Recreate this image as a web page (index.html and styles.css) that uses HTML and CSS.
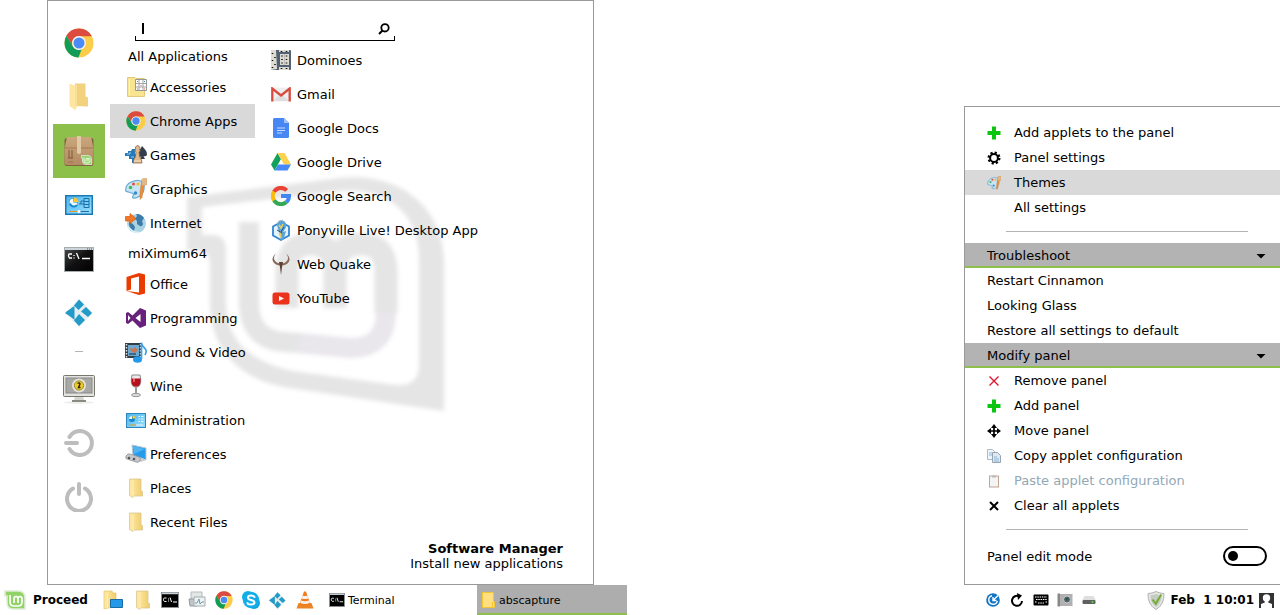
FILE: index.html
```html
<!DOCTYPE html>
<html lang="en">
<head>
<meta charset="utf-8">
<title>Desktop</title>
<link rel="stylesheet" href="styles.css">
</head>
<body>
<svg class="defs" width="0" height="0" aria-hidden="true">
  <defs>
    <linearGradient id="fold" x1="0" x2="1"><stop offset="0" stop-color="#ffeaa6"/><stop offset="1" stop-color="#f0cd6c"/></linearGradient>
    <linearGradient id="blue" x1="0" y1="0" x2="1" y2="1"><stop offset="0" stop-color="#4bb4ee"/><stop offset="1" stop-color="#9be0ff"/></linearGradient>
    <linearGradient id="box" x1="0" y1="0" x2="0" y2="1"><stop offset="0" stop-color="#c9a67c"/><stop offset="1" stop-color="#b48b63"/></linearGradient>
    <linearGradient id="term" x1="0" y1="0" x2="1" y2="1"><stop offset="0" stop-color="#4c4c4c"/><stop offset=".5" stop-color="#111"/><stop offset="1" stop-color="#000"/></linearGradient>
  </defs>
  <symbol id="chrome" viewBox="0 0 30 30">
    <circle cx="15" cy="15" r="14.5" fill="#fccd48"/>
    <path d="M2.4 7.8A14.5 14.5 0 0 1 27.8 8.2H15a6.8 6.8 0 0 0-6 10.2z" fill="#dc4b40"/>
    <path d="M2.4 7.8 9 18.4a6.8 6.8 0 0 0 8.6 2.9L14.5 29.5A14.5 14.5 0 0 1 2.4 7.8z" fill="#119d58"/>
    <circle cx="15" cy="15" r="6.9" fill="#f4f4f4"/><circle cx="15" cy="15" r="5.5" fill="#4c8bf5"/>
  </symbol>
  <symbol id="folder" viewBox="0 0 20 28">
    <path d="M6 .5H16.500V13.500L19 14.500V23.500L6 23z" fill="#f2d27d"/>
    <path d="M.5.500 6.500 3V27.500L.5 23z" fill="#ffe6a0"/><path d="M6.500 3V27.500L8 23V1z" fill="#fbe09a"/>
  </symbol>
  <symbol id="folder-s" viewBox="0 0 14 20">
    <path d="M.5 1H12V13l1.500.5V18H4.500L4 19.500.5 17.500z" fill="url(#fold)" stroke="#d9c691" stroke-width=".8"/>
    <path d="M4 2.500V19" stroke="#fff0bd" stroke-width="1"/>
  </symbol>
  <symbol id="mint" viewBox="0 0 22 20">
    <path d="M1 1H14q7 0 7 7V19H9Q3 19 3 12V6H1z" fill="#91d366" stroke="#e0ecd8" stroke-width="1.600"/>
    <path d="M6 5V12q0 4 4 4h4q4 0 4-4V9q0-2.500-2-2.500T14 9v4M14 9q0-2.500-2-2.500T10 9v4" fill="none" stroke="#fff" stroke-width="1.700"/>
  </symbol>
  <symbol id="package" viewBox="0 0 30 30">
    <rect x=".5" y="2" width="29" height="28" rx="2.500" fill="#80623f"/>
    <path d="M3 1H27L29.500 12V27q0 2-2 2H3Q.5 29 .5 27V12z" fill="url(#box)"/>
    <path d="M.5 12H29.500" stroke="#a17b55"/><path d="M13 0h4v17q-2 2-4 0z" fill="#dfcaa5"/>
    <path d="M5 16v6M8 16v6M4 22h5M4 15h2M7 15h2" stroke="#7d5c3a"/><path d="M4 26h5" stroke="#97734f"/>
    <use href="#mint" x="17" y="19" width="11" height="10"/>
  </symbol>
  <symbol id="control" viewBox="0 0 28 20">
    <rect x=".75" y=".75" width="26.500" height="18.500" fill="url(#blue)" stroke="#1979b4" stroke-width="1.500"/>
    <circle cx="8.500" cy="7.500" r="4.500" fill="#1489ce"/><path d="M9 7V2.500A5 5 0 0 1 13.500 7z" fill="#ffc62b"/><path d="M8.500 7.500V3.500a4 4 0 1 0 4 4z" fill="#f0f7fa"/><path d="M5 8.500a4 4 0 0 0 7 1.500" fill="none" stroke="#1489ce" stroke-width="2"/>
    <path d="M14 9h2V6h3M16 9h3M19 3.500h5v9h-5zM19 6.500h5M19 9.500h5" fill="none" stroke="#1a70a5"/>
    <path d="M4 16.500H13" stroke="#e79a21"/><path d="M15 16.500H24" stroke="#256e9c"/><circle cx="14" cy="16.500" r="1.500" fill="#fff"/>
  </symbol>
  <symbol id="admin" viewBox="0 0 20 15">
    <rect x=".5" y=".5" width="19" height="14" fill="url(#blue)" stroke="#2d87bd"/>
    <circle cx="6" cy="6" r="3" fill="#1489ce"/><path d="M6.500 5.500V2.500a3 3 0 0 1 3 3z" fill="#ffc62b"/><path d="M6 6V3a3 3 0 0 0-3 3z" fill="#f0f7fa"/>
    <path d="M12.500 3.500h1.500M12.500 6h1.500M12.500 8.500h1.500M15 3.500h2.500M15 6h2.500M15 8.500h2.500" stroke="#e4f5fd"/>
    <path d="M3 12h7" stroke="#e79a21"/><path d="M10 12h7" stroke="#f4f4f4"/>
  </symbol>
  <symbol id="terminal" viewBox="0 0 30 25">
    <rect x=".5" y=".5" width="29" height="24" fill="url(#term)" stroke="#a8adb0"/>
    <path d="M1 2H29" stroke="#cdd5dc" stroke-width="2"/><path d="M23 2h5" stroke="#555" stroke-dasharray="1 1"/>
    <path d="M8 7H5.500Q4.500 7 4.500 8.500T5.500 11H8M10 8v1M10 10.500v1M12.500 6l2.500 6M18 11.500H26" fill="none" stroke="#fff" stroke-width="1.300"/>
  </symbol>
  <symbol id="terminal-s" viewBox="0 0 18 16">
    <rect x=".5" y=".5" width="17" height="15" fill="#000" stroke="#8d9194"/>
    <path d="M1 1.500H17" stroke="#c9d1d8" stroke-width="1.500"/>
    <path d="M5.500 6H3.500Q2.500 6 2.500 7.500T3.500 9.500H5.500M7.500 6.500v1M7.500 8.500v1M9 5.500l1.500 4.500M12 10H16" fill="none" stroke="#fff"/>
  </symbol>
  <symbol id="kodi" viewBox="0 0 28 28">
    <path d="M14 0 28 14 14 28 0 14z" fill="#e5edf0"/>
    <path d="M14 .5 19 5.500 13.500 11 9 6.500zM8 8l1.500-1V21L1 13zM21 8 27 14 23 18 16 12.500zM14 15l6 6-6 6-5-5.500z" fill="#229bc9"/>
    <path d="M9 8v12L0 14z" fill="#229bc9"/>
  </symbol>
  <symbol id="monitor" viewBox="0 0 32 30">
    <ellipse cx="16" cy="28.500" rx="15" ry="1.500" fill="#eee"/>
    <path d="M12 22h8l1 4h-10z" fill="#d5d5cf"/><path d="M9 27h14" stroke="#8a8a82" stroke-width="2"/>
    <rect x=".5" y="1.500" width="31" height="21" rx="1" fill="#e2e2de" stroke="#77776f"/>
    <rect x="3" y="4" width="26" height="15" fill="#a8a9a4" stroke="#888"/>
    <circle cx="16" cy="11.500" r="7" fill="#e2e1d6"/><circle cx="16" cy="11.500" r="4.600" fill="#f0cb22" stroke="#a08a2c"/>
    <path d="M14.500 9.500q2-1.500 2.500.5l-1.500 3.500h2" fill="none" stroke="#222" stroke-width="1.400"/>
  </symbol>
  <symbol id="logout" viewBox="0 0 30 28">
    <path d="M5.500 8A12 12 0 1 1 5.500 20M2 14H13" fill="none" stroke="#bdbdbd" stroke-width="4" stroke-linecap="round"/>
  </symbol>
  <symbol id="power" viewBox="0 0 28 30">
    <path d="M8 6.500A12 12 0 1 0 20 6.500M14 2V12" fill="none" stroke="#bdbdbd" stroke-width="4" stroke-linecap="round"/>
  </symbol>
  <symbol id="accessories" viewBox="0 0 22 22">
    <path d="M2.500 1.500H10l1 1H19.500V20.500H2.500z" fill="#f8e491" stroke="#e2cb78"/><path d="M4.500 3v16" stroke="#fff4c4"/>
    <path d="M10.500 3.500h11v11H10.500z" fill="#fff" stroke="#999"/><path d="M14 4V14M18 4V14M11 7.500H21M11 11H21" stroke="#a5a5a5"/>
    <path d="M12 5.500h1M15.500 9.500h1M19 13h1" stroke="#de5d48"/><path d="M19 5.500h1M12 13h1" stroke="#4b83d1"/>
  </symbol>
  <symbol id="games" viewBox="0 0 22 22">
    <path d="M17 2q-1 3-4 5v5q2 2 3.500 0L15 15h5l-1.500-3q3.500 1 3.500-2t-5-8Z" fill="#343e49"/>
    <path d="M0 9h3V7h3l1-2h3v5h3v5h-2v4H7v-4H4v-3H0z" fill="#2879ba"/><path d="M2 10h3V8M6 13h3" stroke="#8ec9ee" fill="none"/>
    <path d="M12.500 1.500a3 3 0 0 1 2 4.500l1 1-1.500 1q0 5 2.500 8l.5 3H8l.5-3q2.500-3 2.500-8L9.500 7l1-1q-1-4 2-4.500" fill="#dfb98c" stroke="#7c5735" stroke-width=".7"/>
    <path d="M9 17h7" stroke="#f7e2c2"/>
  </symbol>
  <symbol id="graphics" viewBox="0 0 22 22">
    <path d="M6 4Q17-.5 19 8q1 5-3 9-5 4-8 3-1-1 .5-2.500T5 14.500 .8 13Q0 7 6 4z" fill="#c9e5f5" stroke="#6fabd2" stroke-width="1.200"/>
    <circle cx="5.500" cy="9.500" r="1.800" fill="#45b95b"/><circle cx="8.500" cy="6" r="1.600" fill="#e4534f"/><circle cx="13" cy="6" r="1.600" fill="#edba2d"/><circle cx="10.500" cy="15" r="1.800" fill="#328dd5"/>
    <path d="m17 1 4.500-.5.500 6-3 1-2 12-2 2V14l1-7z" fill="#eb8c36" stroke="#cc8140" stroke-width=".5"/><path d="m17 1 4.500-.5.500 6-5 1z" fill="#dfb98a"/>
  </symbol>
  <symbol id="internet" viewBox="0 0 22 22">
    <circle cx="11.500" cy="11.500" r="9.500" fill="#a9d3e3"/>
    <path d="M11 2q5-.5 8 4l-2 3 1 3q-1 3-3 2l-3-2v-3l-2-2 2-3zM4 10l4 2 2 3-1 4q-4-1-5-6z" fill="#3d7ca9"/>
    <path d="M2.500 14q5 7 12 6.500" stroke="#dcf1f8" stroke-width="1.500" fill="none"/>
    <path d="M.5 4.500H5V1.500L11 6.500 5 11.500V9H.5z" fill="#f27727" stroke="#d95710" stroke-width=".7"/>
  </symbol>
  <symbol id="office" viewBox="0 0 20 22"><path d="M.5 4 13 0l6 1.500v19L13 22 .5 18l12.500 1.500V3.500L5 5.500V16.500L.5 18z" fill="#eb3c00"/></symbol>
  <symbol id="vs" viewBox="0 0 20 20">
    <path d="M14 0 20 2.500V17.500L14 20 6.500 12.500 2 16 0 15V5l2-1 4.500 3.500zM14.500 6 9.500 10l5 4zM2 7v6l2.500-3z" fill="#68217a" fill-rule="evenodd"/>
  </symbol>
  <symbol id="media" viewBox="0 0 22 22">
    <path d="M0 2H17V17H0z" fill="#353d44"/><path d="M1.500 3v14M15.500 3v14" stroke="#e2e5e7" stroke-width="1.500" stroke-dasharray="1.500 1.500"/>
    <path d="M3 4H14V15H3z" fill="#6fa9d0"/><path d="m4 7 4 1 2-2 3 3-3 3-3-1z" fill="#c67753"/><path d="M4 12h7v2h-7z" fill="#3d6b87"/>
    <ellipse cx="12.500" cy="18.500" rx="4.500" ry="3.200" fill="#2499ea"/><path d="M16.500 18V1.500q0 3 3 5.500t.5 7" fill="none" stroke="#3fa5e9" stroke-width="1.700"/>
  </symbol>
  <symbol id="wine" viewBox="0 0 14 24">
    <path d="M3 1h8q2 9-1.500 11.500-2.500 1.500-5 0Q1 10 3 1z" fill="#ececec" stroke="#888"/><path d="M2.500 4.500h9q.5 6-2 7.500-2.500 1-5 0-2.500-1.500-2-7.500z" fill="#b70f1c"/>
    <path d="M7 13v7" stroke="#999" stroke-width="2"/><ellipse cx="7" cy="21" rx="4.500" ry="1.700" fill="#d9d9d9" stroke="#999"/><path d="M5 3v5" stroke="#f5b9bd"/>
  </symbol>
  <symbol id="prefs" viewBox="0 0 22 20">
    <path d="M7 1 21 4v12L8 11z" fill="#279bea" stroke="#bfc7cd"/><path d="m8 2 12 3-11 5z" fill="#4fb4f4"/><path d="m11 15 6-1 4 2-5 2z" fill="#ccc"/>
    <path d="M1 12q2-3 4-2l9 3q2 1 1 4-2 2-4 1l-9-3q-2 0-1-3z" fill="#c4c7cb" stroke="#888" stroke-width=".7"/><circle cx="4" cy="14" r="1.300" fill="#555"/><circle cx="9" cy="15" r="1.300" fill="#555"/>
  </symbol>
  <symbol id="dominoes" viewBox="0 0 20 20">
    <rect width="20" height="20" rx="1" fill="#536174"/><path d="M0 0h5l1 19-6 1zM9 4h9v11H9zM8 0h10v2H8zM8 17h10v3H8z" fill="#dedbd2"/>
    <path d="M1.500 3v1M4 7v1M1.500 10v1M4 14v1M1.500 17v1M11 5.500v1M15.500 5.500v1M11 9v1M15.500 9v1M11 12.500v1M15.500 12.500v1M10.500 1v1M15.500 1v1M10.500 18v1M15.500 18v1" stroke="#111" stroke-width="1.600"/><path d="M13.500 4v11" stroke="#bbb"/>
  </symbol>
  <symbol id="gmail" viewBox="0 0 20 15"><path d="M1 .5H19V14.500H1z" fill="#eee"/><path d="m2 14 8-7 8 7z" fill="#dedede"/><path d="M1.300 14.500V1.500L10 8.500l8.700-7V14.500" fill="none" stroke="#d94a3f" stroke-width="2.300"/></symbol>
  <symbol id="docs" viewBox="0 0 16 20"><path d="M1.500 0H11l5 5V18.500q0 1.500-1.500 1.500h-13Q0 20 0 18.500v-17Q0 0 1.500 0z" fill="#4787f3"/><path d="M11 0v5h5z" fill="#a3c3fa"/><path d="M4 10h8M4 12.500h8M4 15h5" stroke="#c5d9fc" stroke-width="1.200"/></symbol>
  <symbol id="drive" viewBox="0 0 20 18"><path d="M6.500 0 10 6 3.500 17.500 0 11.500z" fill="#11a15d"/><path d="M6.500 0H13.500L20 11.500H13z" fill="#ffd04b"/><path d="M7 11.500H20L16.500 17.500H3.500z" fill="#4688f4"/></symbol>
  <symbol id="google" viewBox="0 0 20 20"><g fill="none" stroke-width="4"><path d="M3 5.800A8 8 0 0 1 15.700 4.400" stroke="#ea4335"/><path d="M3 14.200A8 8 0 0 1 3 5.800" stroke="#fbbc05"/><path d="M15.300 16A8 8 0 0 1 3 14.200" stroke="#34a853"/><path d="M10 10H18q0 4-2.700 6" stroke="#4285f4"/></g></symbol>
  <symbol id="pony" viewBox="0 0 18 22">
    <path d="m9 3 8 4.500v9L9 21l-8-4.500v-9z" fill="#e4f3fb" stroke="#3186d2" stroke-width="1.800"/>
    <path d="M5 6Q6 0 12 2q4 3 1 8l-2 3 3-1-2 7-3 3-2-9z" fill="#5aa3d8"/><path d="m7 6 2 3 2-4M8 12l1 7" stroke="#e9cf55" stroke-width="1.500" fill="none"/><path d="M5 5q1-4 6-4" stroke="#a4b3bf" fill="none"/><path d="M5 11l5 3M12 8l-3 5" stroke="#234d88" fill="none"/>
  </symbol>
  <symbol id="quake" viewBox="0 0 18 22"><path d="M4 .5Q-1 4 1 8.500 3 12.500 9 12.500T17 8.500Q19 4 14 .5q3 3.500 1.500 6.500Q13.500 10.500 9 10.500T2.500 7Q1 4 4 .5z" fill="#8a6a5c"/><path d="M7 9h4L10 14 9 22 8 14z" fill="#5d3f34"/></symbol>
  <symbol id="youtube" viewBox="0 0 18 13"><rect x=".5" y=".5" width="17" height="12" rx="2.500" fill="#ea321d"/><path d="m7 4 5 2.500L7 9z" fill="#fff"/></symbol>
  <symbol id="plus" viewBox="0 0 14 14"><path d="M5 .5h4V5h4.500v4H9v4.500H5V9H.5V5H5z" fill="#0bc510"/></symbol>
  <symbol id="gear" viewBox="0 0 14 14"><circle cx="7" cy="7" r="5.200" fill="none" stroke="#000" stroke-width="2.600" stroke-dasharray="2.100 1.980"/><circle cx="7" cy="7" r="3.900" fill="none" stroke="#000" stroke-width="2"/></symbol>
  <symbol id="remove" viewBox="0 0 14 14"><path d="m2.500 2.500 9 9M11.500 2.500l-9 9" stroke="#dd1730" stroke-width="1.400"/></symbol>
  <symbol id="move" viewBox="0 0 14 14"><path d="M7 2v10M2 7h10" stroke="#000" stroke-width="1.700"/><path d="M7 0 10 4H4zM7 14l3-4H4zM0 7l4-3v6zM14 7l-4-3v6z"/></symbol>
  <symbol id="copy" viewBox="0 0 14 14"><path d="M.5.5h5l2 2v8h-7z" fill="#eef5fb" stroke="#b0b8c0"/><path d="M5.500 3.500h5l3 3v7h-8z" fill="#dceaf5" stroke="#99a4ae"/><path d="M2 4h3M2 6h3M7 8h3M7 10h5M7 12h5" stroke="#88b9db"/></symbol>
  <symbol id="paste" viewBox="0 0 14 14"><rect x="2.500" y="2" width="9" height="11" fill="#f4f4f4" stroke="#c1a597"/><path d="M5 1.500h4v2H5z" fill="#bbb"/></symbol>
  <symbol id="clear" viewBox="0 0 14 14"><path d="m3 3 8 8M11 3l-8 8" stroke="#000" stroke-width="2"/></symbol>
  <symbol id="desktop" viewBox="0 0 20 20"><path d="M1 1h8l1 2h3v14l-8 1-4 1z" fill="url(#fold)" stroke="#dfbd66" stroke-width=".6"/><path d="M4.500 3v15" stroke="#fff0bd"/><path d="M7.500 9.500h12v8h-12z" fill="#2499ea" stroke="#196ba5"/></symbol>
  <symbol id="sysmon" viewBox="0 0 18 18"><path d="M3 1h11v9H3z" fill="#e4e6e6" stroke="#b5bbbd"/><path d="M1 8h8v7H2z" fill="#bfc5c8" stroke="#929b9f"/><path d="M6 6h11v9H6z" fill="#eff2f2" stroke="#a4acaf"/><path d="M7 12h2l2-4 1 5 2-2h2" stroke="#6b9cae" fill="none"/></symbol>
  <symbol id="skype" viewBox="0 0 18 18"><circle cx="6" cy="6" r="6" fill="#10aee8"/><circle cx="12" cy="12" r="6" fill="#10a6e1"/><circle cx="9" cy="9" r="8.200" fill="#13ade7"/><path d="M12.500 6Q11.500 4.500 9 4.500 6 4.500 6 6.500T9 9t3.500 2.500Q12.500 13.500 9 13.500T5.500 12" fill="none" stroke="#fff" stroke-width="2" stroke-linecap="round"/></symbol>
  <symbol id="vlc" viewBox="0 0 18 18"><path d="m2.500 12-2 5.500h17l-2-5.500z" fill="#ed8424"/><path d="M8 .5h2l4.500 13q-5.500 2.500-11 0z" fill="#f27c1d"/><path d="m6.600 4.500-1 3q3.400 1.200 6.800 0l-1-3q-2.400 1-4.800 0M5 9.500l-.8 2.500q4.800 1.800 9.600 0L13 9.500q-4 1.500-8 0" fill="#f5f1ec"/></symbol>
  <symbol id="update" viewBox="0 0 14 14"><circle cx="7" cy="7" r="6.800" fill="#1274c5"/><path d="M6 2.800a4.300 4.300 0 1 0 5.300 5" stroke="#fff" stroke-width="1.400" fill="none"/><path d="M12 2.500 7.500 7M7 4v3.500h3.500" stroke="#fff" stroke-width="1.400" fill="none"/></symbol>
  <symbol id="reload" viewBox="0 0 14 14"><path d="M9 3.200A5 5 0 1 0 12 8" fill="none" stroke="#000" stroke-width="2"/><path d="m7 0 5 2.500L8 7z"/></symbol>
  <symbol id="keyboard" viewBox="0 0 16 12"><rect x=".5" y=".5" width="15" height="11" rx="1"/><path d="M2 3h12M3 5.500h11M2 8h2M12.500 8h1.500M5 9h6" stroke="#fff" stroke-width="1.200" stroke-dasharray="1.500 .8"/></symbol>
  <symbol id="camera" viewBox="0 0 16 14"><path d="M.5.5H3v13H.5z" fill="#888"/><path d="M3 1h12.500v12H3z" fill="#b0b0b0"/><circle cx="10" cy="6.500" r="3.500" fill="#536568" stroke="#ccc"/><circle cx="10" cy="6" r="1.500" fill="#2d5359"/></symbol>
  <symbol id="drive-tray" viewBox="0 0 14 10"><path d="M2.500 1h9L13.500 5H.5z" fill="#dedede"/><rect x=".5" y="5" width="13" height="4" rx="1" fill="#5e625f"/><circle cx="10.500" cy="7" r="1" fill="#66df47"/></symbol>
  <symbol id="shield" viewBox="0 0 18 19"><path d="M9 .5q4 2 8 2 .5 11-8 16-8.500-5-8-16 4 0 8-2z" fill="#e4e6e2" stroke="#b3b3b3"/><path d="M9 3q3 1.200 5.700 1.200Q14.500 12 9 16 3.500 12 3.300 4.200 6 4.200 9 3" fill="#c5cac3"/><path d="m4.500 9 2-1 2 3L13.500 3l1.500 1L9 14.500z" fill="#73ad35"/></symbol>
  <symbol id="user" viewBox="0 0 15 15"><path d="M0 0h15v15H0z" fill="#333"/><circle cx="7.500" cy="5" r="3.700" fill="#fff"/><path d="M5.800 7h3.400v2.500L13 11v4H2v-4l3.800-1.500z" fill="#fff"/></symbol>
  <symbol id="task-folder" viewBox="0 0 15 16"><path d="M.5.500h11V9l1 1v5.500H.5z" fill="#ffdf80" stroke="#f2c531"/><path d="M10.500 10v5.500" stroke="#f2c531"/></symbol>
</svg>

<main class="desktop">
  <section class="start-menu" aria-label="Applications">
    <svg class="watermark" viewBox="0 0 264 240" aria-hidden="true">
      <g transform="translate(-183 -174)">
        <path fill-rule="evenodd" fill="#e5e5e5" d="M187 197 340 178C402 172 444 209 444 263V411L290 388C235 380 210 345 210 303V266Q210 251 198 251H187zM202 207V235H212Q226 235 226 250V303C227 341 249 361 293 371L395 385Q419 387 419 365V258C419 215 389 187 340 191z"/>
        <g fill="none" stroke-width="20">
          <path stroke="#e5e5e5" d="M249 222V302Q249 340 285 342L300 343"/>
          <path stroke="#e9e6ec" d="M299 343 350 348Q386 348 386 312"/>
          <path stroke="#e5e5e5" stroke-width="23" d="M386 313V272Q386 244 361 244T335 272V308M287 308V272Q287 244 311 244T335 272"/>
        </g>
      </g>
    </svg>
    <nav class="favorites" aria-label="Favorites">
      <button class="fav" aria-label="Chrome"><svg width="30" height="30"><use href="#chrome"/></svg></button>
      <button class="fav" aria-label="Files"><svg width="20" height="28"><use href="#folder"/></svg></button>
      <button class="fav fav-active" aria-label="Software Manager"><svg width="30" height="30"><use href="#package"/></svg></button>
      <button class="fav" aria-label="System Settings"><svg width="28" height="20"><use href="#control"/></svg></button>
      <button class="fav" aria-label="Terminal"><svg width="30" height="25"><use href="#terminal"/></svg></button>
      <button class="fav" aria-label="Kodi"><svg width="28" height="28"><use href="#kodi"/></svg></button>
      <hr class="fav-rule">
      <button class="fav" aria-label="Lock screen"><svg width="32" height="30"><use href="#monitor"/></svg></button>
      <button class="fav" aria-label="Log out"><svg width="30" height="28"><use href="#logout"/></svg></button>
      <button class="fav" aria-label="Shut down"><svg width="28" height="30"><use href="#power"/></svg></button>
    </nav>
    <div class="menu-body">
      <div class="search">
        <input class="search-input" type="text" aria-label="Search">
        <span class="caret"></span>
        <svg width="12" height="12" viewBox="0 0 12 12" aria-hidden="true"><circle cx="7" cy="4.800" r="3.700" fill="none" stroke="#000" stroke-width="1.800"/><path d="M4.500 7.500 1 11" stroke="#000" stroke-width="2"/></svg>
      </div>
      <div class="columns">
        <div class="categories">
          <button class="row plain">All Applications</button>
          <button class="row"><span class="ic"><svg width="22" height="22"><use href="#accessories"/></svg></span>Accessories</button>
          <button class="row selected"><span class="ic"><svg width="20" height="20"><use href="#chrome"/></svg></span>Chrome Apps</button>
          <button class="row"><span class="ic"><svg width="22" height="22"><use href="#games"/></svg></span>Games</button>
          <button class="row"><span class="ic"><svg width="22" height="22"><use href="#graphics"/></svg></span>Graphics</button>
          <button class="row"><span class="ic"><svg width="22" height="22"><use href="#internet"/></svg></span>Internet</button>
          <button class="row plain">miXimum64</button>
          <button class="row"><span class="ic"><svg width="20" height="22"><use href="#office"/></svg></span>Office</button>
          <button class="row"><span class="ic"><svg width="20" height="20"><use href="#vs"/></svg></span>Programming</button>
          <button class="row"><span class="ic"><svg width="22" height="22"><use href="#media"/></svg></span>Sound &amp; Video</button>
          <button class="row"><span class="ic"><svg width="14" height="24"><use href="#wine"/></svg></span>Wine</button>
          <button class="row"><span class="ic"><svg width="20" height="15"><use href="#admin"/></svg></span>Administration</button>
          <button class="row"><span class="ic"><svg width="22" height="20"><use href="#prefs"/></svg></span>Preferences</button>
          <button class="row"><span class="ic"><svg width="14" height="20"><use href="#folder-s"/></svg></span>Places</button>
          <button class="row"><span class="ic"><svg width="14" height="20"><use href="#folder-s"/></svg></span>Recent Files</button>
        </div>
        <div class="apps">
          <button class="row"><span class="ic"><svg width="20" height="20"><use href="#dominoes"/></svg></span>Dominoes</button>
          <button class="row"><span class="ic"><svg width="20" height="15"><use href="#gmail"/></svg></span>Gmail</button>
          <button class="row"><span class="ic"><svg width="16" height="20"><use href="#docs"/></svg></span>Google Docs</button>
          <button class="row"><span class="ic"><svg width="20" height="18"><use href="#drive"/></svg></span>Google Drive</button>
          <button class="row"><span class="ic"><svg width="20" height="20"><use href="#google"/></svg></span>Google Search</button>
          <button class="row"><span class="ic"><svg width="18" height="22"><use href="#pony"/></svg></span>Ponyville Live! Desktop App</button>
          <button class="row"><span class="ic"><svg width="18" height="22"><use href="#quake"/></svg></span>Web Quake</button>
          <button class="row"><span class="ic"><svg width="18" height="13"><use href="#youtube"/></svg></span>YouTube</button>
        </div>
      </div>
      <div class="info"><strong>Software Manager</strong><span>Install new applications</span></div>
    </div>
  </section>

  <section class="panel-menu" aria-label="Panel">
    <button class="item"><svg width="14" height="14"><use href="#plus"/></svg>Add applets to the panel</button>
    <button class="item"><svg width="14" height="14"><use href="#gear"/></svg>Panel settings</button>
    <button class="item selected"><svg width="14" height="14"><use href="#graphics"/></svg>Themes</button>
    <button class="item indent">All settings</button>
    <hr class="rule">
    <button class="item group">Troubleshoot<svg width="10" height="6" viewBox="0 0 10 6"><path d="M.5 1h9L5 5.500z"/></svg></button>
    <button class="item">Restart Cinnamon</button>
    <button class="item">Looking Glass</button>
    <button class="item">Restore all settings to default</button>
    <button class="item group">Modify panel<svg width="10" height="6" viewBox="0 0 10 6"><path d="M.5 1h9L5 5.500z"/></svg></button>
    <button class="item"><svg width="14" height="14"><use href="#remove"/></svg>Remove panel</button>
    <button class="item"><svg width="14" height="14"><use href="#plus"/></svg>Add panel</button>
    <button class="item"><svg width="14" height="14"><use href="#move"/></svg>Move panel</button>
    <button class="item"><svg width="14" height="14"><use href="#copy"/></svg>Copy applet configuration</button>
    <button class="item" disabled><svg width="14" height="14"><use href="#paste"/></svg>Paste applet configuration</button>
    <button class="item"><svg width="14" height="14"><use href="#clear"/></svg>Clear all applets</button>
    <hr class="rule">
    <label class="toggle-row">Panel edit mode<input class="toggle" type="checkbox"></label>
  </section>
</main>

<footer class="taskbar">
  <button class="start"><svg width="22" height="20"><use href="#mint"/></svg>Proceed</button>
  <div class="launchers">
    <button class="launch" aria-label="Show desktop"><svg width="20" height="20"><use href="#desktop"/></svg></button>
    <button class="launch" aria-label="Files"><svg width="14" height="20"><use href="#folder-s"/></svg></button>
    <button class="launch" aria-label="Terminal"><svg width="18" height="16"><use href="#terminal-s"/></svg></button>
    <button class="launch" aria-label="System Monitor"><svg width="18" height="18"><use href="#sysmon"/></svg></button>
    <button class="launch" aria-label="Chrome"><svg width="18" height="18"><use href="#chrome"/></svg></button>
    <button class="launch" aria-label="Skype"><svg width="18" height="18"><use href="#skype"/></svg></button>
    <button class="launch" aria-label="Kodi"><svg width="17" height="17"><use href="#kodi"/></svg></button>
    <button class="launch" aria-label="VLC"><svg width="18" height="18"><use href="#vlc"/></svg></button>
  </div>
  <div class="tasks">
    <button class="task"><svg width="16" height="14"><use href="#terminal-s"/></svg>Terminal</button>
    <button class="task task-active"><svg width="15" height="16"><use href="#task-folder"/></svg>abscapture</button>
  </div>
  <div class="tray">
    <button class="launch" aria-label="Updates"><svg width="14" height="14"><use href="#update"/></svg></button>
    <button class="launch" aria-label="Reload"><svg width="14" height="14"><use href="#reload"/></svg></button>
    <button class="launch" aria-label="Keyboard"><svg width="16" height="12"><use href="#keyboard"/></svg></button>
    <button class="launch" aria-label="Screenshot"><svg width="16" height="14"><use href="#camera"/></svg></button>
    <button class="launch" aria-label="Drives"><svg width="14" height="10"><use href="#drive-tray"/></svg></button>
  </div>
  <div class="status">
    <svg width="18" height="19" aria-hidden="true"><use href="#shield"/></svg>
    <time class="clock">Feb&nbsp; 1 10:01</time>
    <svg width="15" height="15" aria-hidden="true"><use href="#user"/></svg>
  </div>
</footer>
</body>
</html>
```
FILE: styles.css
```css
* { box-sizing: border-box; }

body {
  display: flex;
  flex-direction: column;
  min-height: 100vh;
  margin: 0;
  background: #fff;
  color: #000;
  font: 13px/15px "DejaVu Sans", Verdana, sans-serif;
  overflow-x: hidden;
}

button {
  margin: 0;
  padding: 0;
  border: 0;
  background: none;
  color: inherit;
  font: inherit;
  text-align: left;
  white-space: nowrap;
}

svg { display: block; flex: none; }
.defs { position: absolute; }
hr { margin: 0; border: 0; background: #b3b3b3; }

.desktop {
  display: flex;
  flex: 1;
  align-items: flex-end;
  justify-content: space-between;
  padding-left: 47px;
}

/* Start menu */
.start-menu {
  position: relative;
  display: flex;
  align-self: stretch;
  width: 547px;
  padding: 15px 30px 13px 5px;
  border: 1px solid #999;
}

.watermark {
  position: absolute;
  top: 173px;
  left: 135px;
  width: 264px;
  filter: blur(2px);
}

.favorites, .menu-body { position: relative; }

.favorites {
  display: flex;
  flex-direction: column;
  width: 52px;
}

.fav {
  display: flex;
  align-items: center;
  justify-content: center;
  height: 54px;
}
.fav-active { background: #8cc04b; }
.fav-rule { width: 8px; height: 1px; margin: 11px auto 10px; }

.menu-body {
  display: flex;
  flex: 1;
  flex-direction: column;
  margin-left: 5px;
}

.search {
  position: relative;
  display: flex;
  align-items: center;
  width: 260px;
  height: 25px;
  margin-left: 25px;
  padding-right: 5px;
}
.search::after {
  content: "";
  position: absolute;
  inset: auto 0 0;
  height: 4px;
  border: solid #000;
  border-width: 0 1px 1px;
  pointer-events: none;
}
.search-input {
  flex: 1;
  min-width: 0;
  padding: 0 8px;
  border: 0;
  outline: 0;
  background: none;
  font: inherit;
}
.caret {
  position: absolute;
  top: 7px;
  left: 7px;
  width: 2px;
  height: 11px;
  background: #000;
}

.columns { display: flex; gap: 15px; margin-top: 2px; }
.categories, .apps { display: flex; flex-direction: column; }
.categories { width: 145px; }
.apps { flex: 1; }

.row {
  display: flex;
  align-items: center;
  gap: 3px;
  height: 34px;
  padding-left: 15px;
}
.apps .row { gap: 5px; padding-left: 0; }
.plain { height: 27px; padding-left: 18px; }
.ic { display: flex; flex: none; justify-content: center; width: 22px; }
.selected { background: #d9d9d9; }

.info {
  display: flex;
  flex-direction: column;
  margin-top: auto;
  text-align: right;
}

/* Panel context menu */
.panel-menu {
  display: flex;
  flex-direction: column;
  width: 316px;
  padding: 13px 0;
  border: solid #999;
  border-width: 1px 0 1px 1px;
}

.item {
  display: flex;
  align-items: center;
  gap: 13px;
  height: 25px;
  padding: 0 14px 0 22px;
}
.item:disabled { color: #93a8b5; }
.indent { padding-left: 49px; }
.group {
  justify-content: space-between;
  background: #b3b3b3;
  box-shadow: inset 0 -2px #8cc04b;
}
.rule { height: 1px; margin: 11px 32px 11px 41px; }

.toggle-row {
  display: flex;
  align-items: center;
  justify-content: space-between;
  height: 30px;
  padding: 0 13px 0 22px;
}
.toggle {
  display: flex;
  align-items: center;
  width: 44px;
  height: 20px;
  margin: 0;
  padding: 0 3px;
  border: 2px solid #000;
  border-radius: 10px;
  appearance: none;
}
.toggle::before {
  content: "";
  width: 10px;
  height: 10px;
  border-radius: 50%;
  background: #000;
}

/* Taskbar */
.taskbar {
  display: flex;
  align-items: center;
  height: 30px;
  padding: 0 6px 0 4px;
}
.start {
  display: flex;
  align-items: center;
  gap: 7px;
  width: 95px;
  font-size: 12px;
  font-weight: bold;
}
.launchers { display: flex; }
.launch {
  display: flex;
  align-items: center;
  justify-content: center;
  width: 27px;
  height: 30px;
}
.launchers .launch:first-child { margin-right: 3px; }
.tasks { display: flex; flex: 1; padding-left: 9px; }
.task {
  display: flex;
  align-items: center;
  gap: 3px;
  width: 150px;
  height: 30px;
  padding-left: 2px;
  font-size: 11px;
}
.task-active {
  gap: 2px;
  padding-left: 5px;
  background: #adadad;
  box-shadow: inset 0 -2px #8cc04b;
}
.tray { display: flex; }
.tray .launch { width: 24px; }
.status {
  display: flex;
  align-items: center;
  gap: 5px;
  padding-left: 46px;
}
.clock { font-weight: bold; font-size: 12px; }
```
